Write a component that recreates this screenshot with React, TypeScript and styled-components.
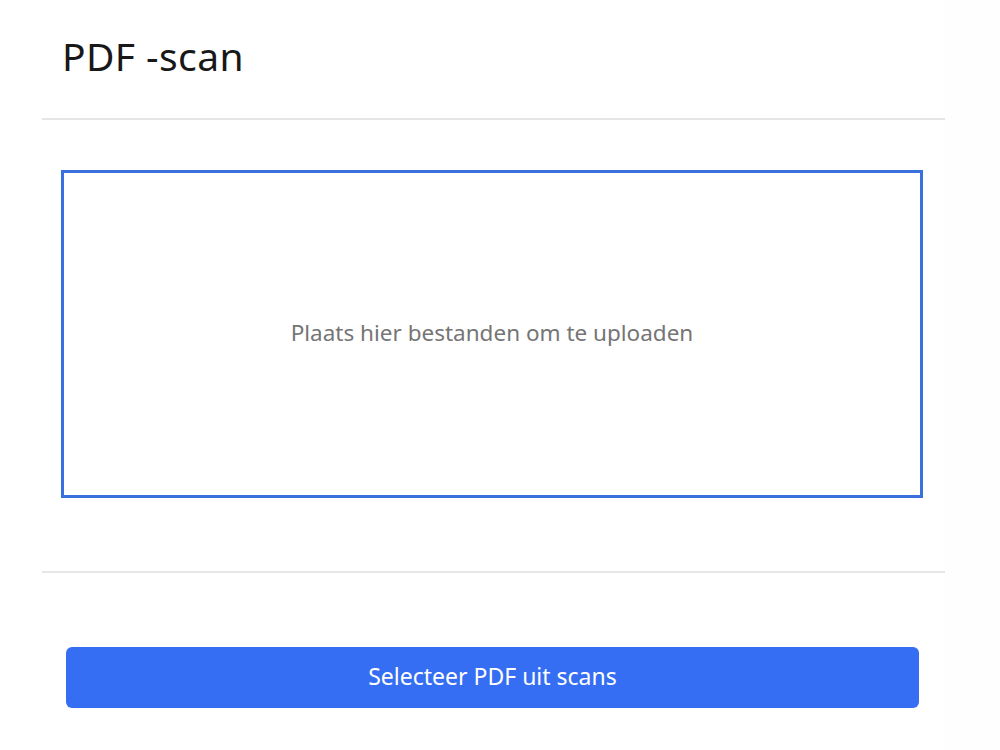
import styled, { createGlobalStyle } from 'styled-components';

const GlobalStyle = createGlobalStyle`
  html, body {
    margin: 0;
    padding: 0;
    background-color: #fefefe;
  }
  body {
    font-family: 'Noto Sans', 'Open Sans', sans-serif;
  }
`;

const Panel = styled.div`
  width: 945px;
  min-height: 750px;
  background-color: #ffffff;
`;

const Header = styled.div`
  margin-left: 42px;
  height: 120px;
  border-bottom: 2px solid #e6e6e6;
  display: flex;
  align-items: flex-start;
  padding-left: 20px;
  box-sizing: border-box;
`;

const Title = styled.h1`
  margin: 29px 0 0;
  font-size: 39px;
  font-weight: 400;
  color: #181818;
  letter-spacing: 0.4px;
`;

const Body = styled.div`
  margin-left: 42px;
  padding: 50px 22px 73px 19px;
  border-bottom: 2px solid #e6e6e6;
`;

const DropZone = styled.div`
  height: 328px;
  padding-bottom: 4px;
  border: 3px solid #3a70dd;
  box-sizing: border-box;
  display: flex;
  align-items: center;
  justify-content: center;
  font-size: 22.5px;
  color: #757575;
`;

const Footer = styled.div`
  padding: 74px 26px 0 66px;
`;

const PrimaryButton = styled.button`
  width: 100%;
  height: 61px;
  padding: 0 0 4px;
  border: 0;
  border-radius: 6px;
  background-color: #356ef3;
  color: #ffffff;
  font-family: inherit;
  font-size: 23px;
  cursor: pointer;
`;

export default function App() {
  return (
    <>
      <GlobalStyle />
      <Panel>
        <Header>
          <Title>PDF -scan</Title>
        </Header>
        <Body>
          <DropZone>Plaats hier bestanden om te uploaden</DropZone>
        </Body>
        <Footer>
          <PrimaryButton>Selecteer PDF uit scans</PrimaryButton>
        </Footer>
      </Panel>
    </>
  );
}
